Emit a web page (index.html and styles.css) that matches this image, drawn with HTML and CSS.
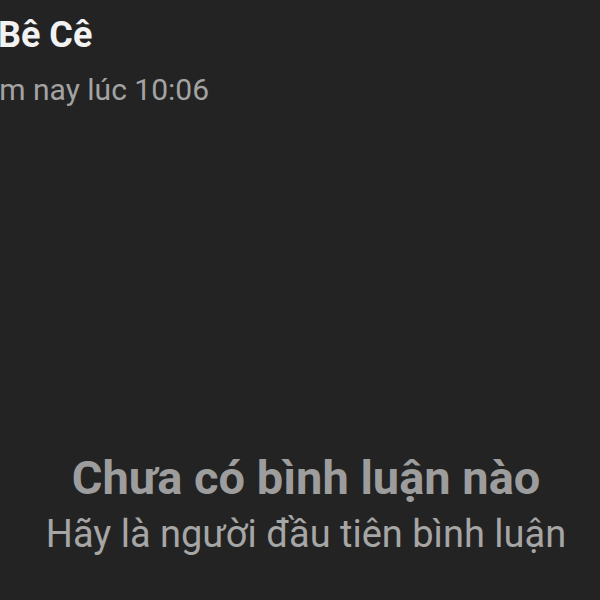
FILE: index.html
```html
<!DOCTYPE html>
<html lang="vi">
<head>
<meta charset="utf-8">
<link rel="stylesheet" href="styles.css">
</head>
<body>
<div class="screen">
  <header class="post-head">
    <div class="author">Bê Cê</div>
    <div class="time">Hôm nay lúc 10:06</div>
  </header>
  <section class="empty">
    <div class="empty-title">Chưa có bình luận nào</div>
    <div class="empty-sub">Hãy là người đầu tiên bình luận</div>
  </section>
</div>
</body>
</html>
```
FILE: styles.css
```css
html, body {
  margin: 0;
  padding: 0;
  background: #232323;
}
.screen {
  width: 600px;
  height: 600px;
  overflow: hidden;
  display: flex;
  flex-direction: column;
  font-family: Roboto, "Noto Sans", sans-serif;
}
.post-head {
  display: flex;
  flex-direction: column;
  align-items: flex-end;
  width: 209px;
  padding-top: 14px;
}
.author {
  align-self: flex-start;
  margin-left: -2px;
  font-size: 36px;
  font-weight: 700;
  color: #f2f2f2;
  line-height: 42px;
}
.time {
  font-size: 30px;
  color: #a3a3a3;
  line-height: 36px;
  margin-top: 16px;
  white-space: nowrap;
}
.empty {
  margin-top: auto;
  padding-left: 12px;
  padding-bottom: 43px;
  display: flex;
  flex-direction: column;
  align-items: center;
}
.empty-title {
  font-size: 47px;
  font-weight: 700;
  color: #9d9d9d;
  line-height: 56px;
}
.empty-sub {
  font-size: 38px;
  color: #a6a6a6;
  line-height: 46px;
  margin-top: 5px;
}
```
